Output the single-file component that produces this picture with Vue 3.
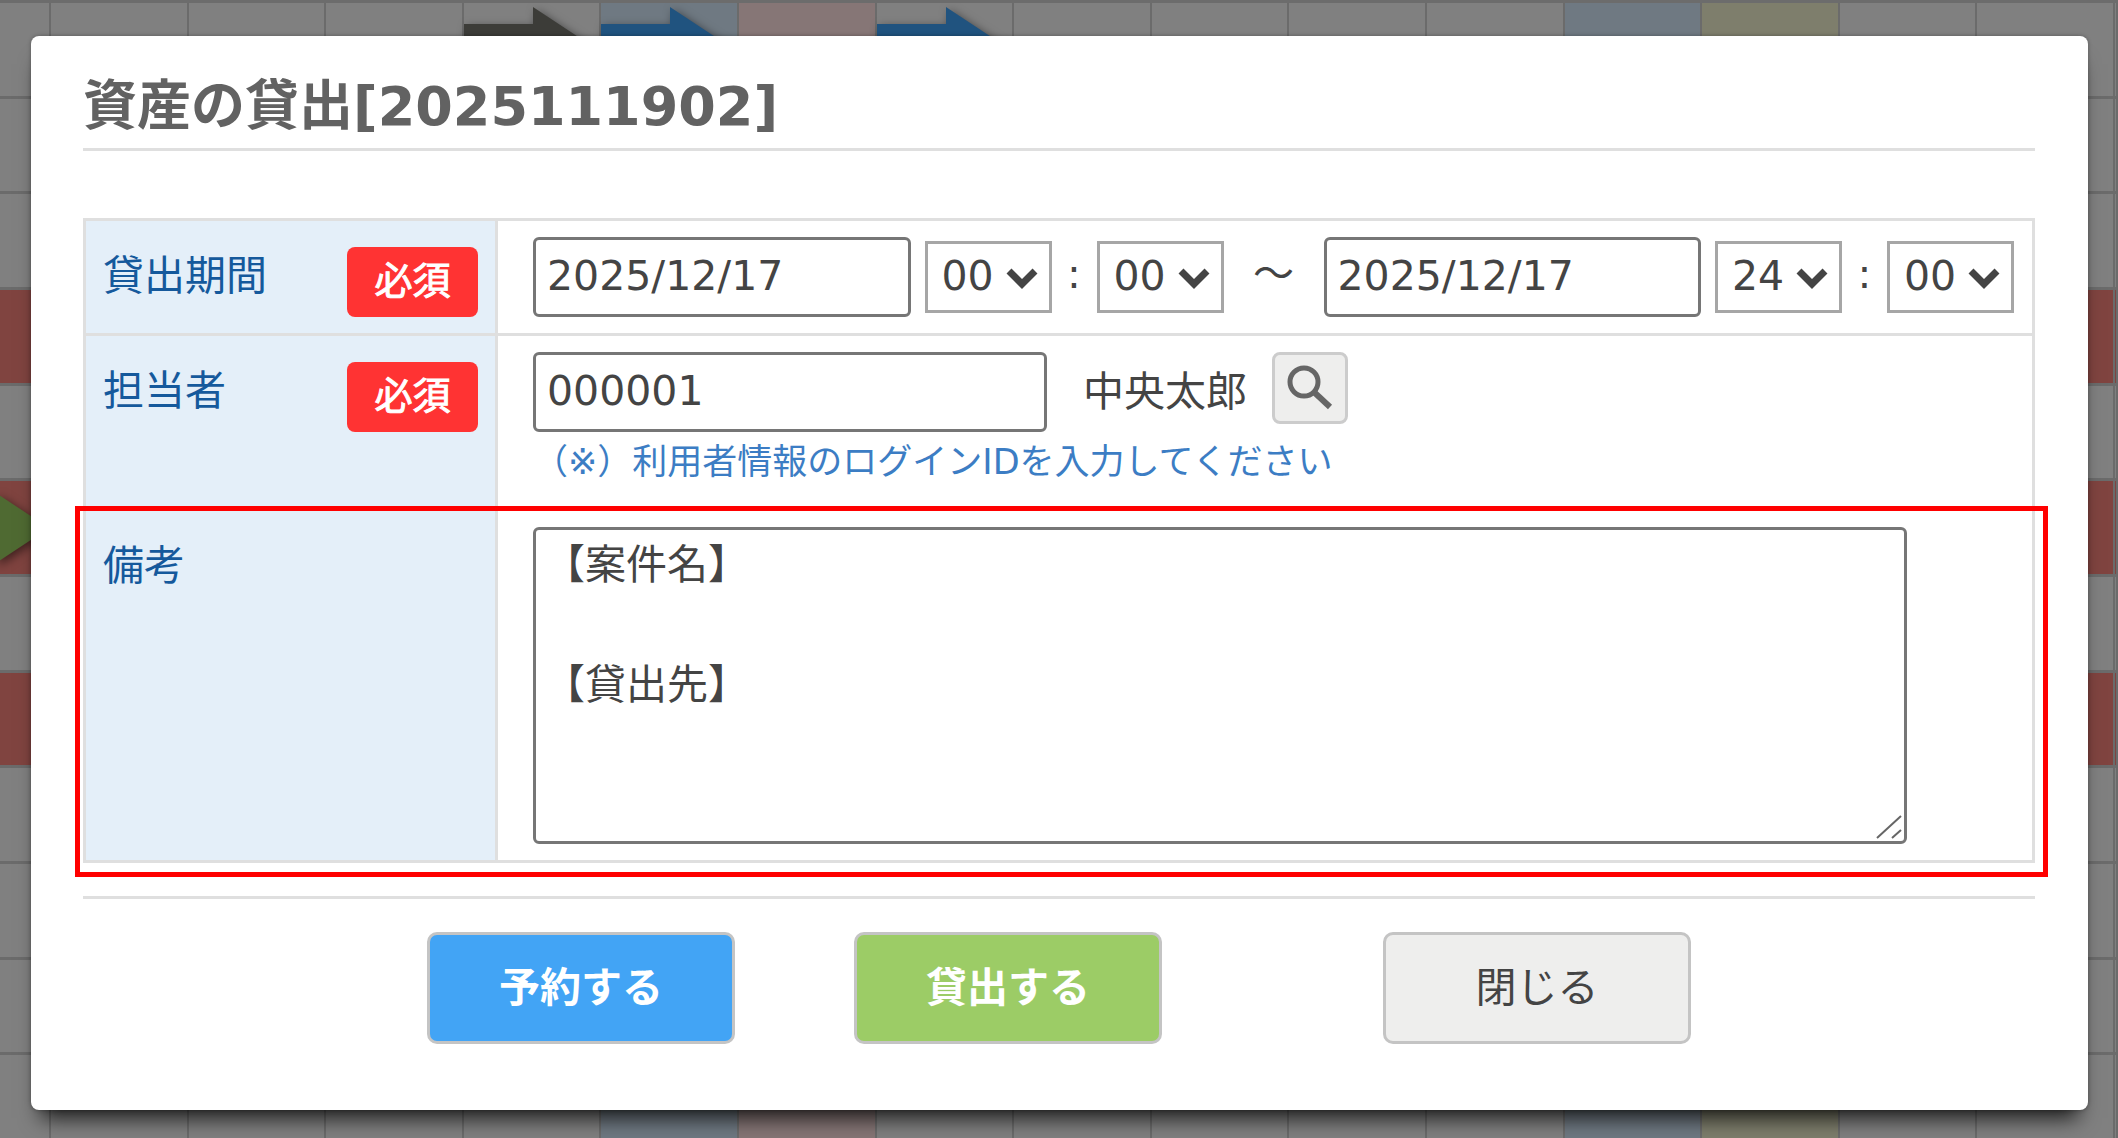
<script setup>
import { ref } from 'vue'

const columns = Array.from({ length: 17 }, (_, i) => i)
const rows = Array.from({ length: 12 }, (_, i) => i)
const tints = { 5: 'saturday', 6: 'sunday', 12: 'saturday', 13: 'holiday' }
const arrows = { '0-4': 'dark', '0-5': 'blue', '0-7': 'blue', '5-0': 'green' }
const busyRows = [3, 5, 7]

const cellClass = (r, c) => (busyRows.includes(r) ? 'busy' : tints[c] || '')

const hours = Array.from({ length: 25 }, (_, i) => String(i).padStart(2, '0'))
const minutes = ['00', '15', '30', '45']

const startDate = ref('2025/12/17')
const startHour = ref('00')
const startMinute = ref('00')
const endDate = ref('2025/12/17')
const endHour = ref('24')
const endMinute = ref('00')
const userId = ref('000001')
const note = ref('【案件名】\n\n【貸出先】\n')
</script>

<template>
  <div class="page">
    <div class="schedule" aria-hidden="true">
      <template v-for="r in rows" :key="r">
        <div v-for="c in columns" :key="c" class="cell" :class="cellClass(r, c)">
          <svg v-if="arrows[`${r}-${c}`]" class="arrow" :class="arrows[`${r}-${c}`]" width="122" height="70" viewBox="0 0 122 70">
            <path d="M0 17H69V0L122 35L69 70V53H0Z" />
          </svg>
        </div>
      </template>
    </div>

    <main class="modal" role="dialog" aria-labelledby="dialog-title">
      <h1 id="dialog-title">資産の貸出[2025111902]</h1>

      <table class="form">
        <tbody>
          <tr>
            <th scope="row">
              <div class="label">
                <label for="start-date">貸出期間</label>
                <span class="required">必須</span>
              </div>
            </th>
            <td>
              <div class="line">
                <input id="start-date" v-model="startDate" type="text" class="date" />
                <span class="select">
                  <select v-model="startHour" aria-label="開始時">
                    <option v-for="h in hours" :key="h">{{ h }}</option>
                  </select>
                  <svg class="chevron" viewBox="0 0 32 22"><path d="M3 4L16 17L29 4" /></svg>
                </span>
                <span class="colon">:</span>
                <span class="select">
                  <select v-model="startMinute" aria-label="開始分">
                    <option v-for="m in minutes" :key="m">{{ m }}</option>
                  </select>
                  <svg class="chevron" viewBox="0 0 32 22"><path d="M3 4L16 17L29 4" /></svg>
                </span>
                <span class="tilde">～</span>
                <input v-model="endDate" type="text" class="date" aria-label="終了日" />
                <span class="select">
                  <select v-model="endHour" aria-label="終了時">
                    <option v-for="h in hours" :key="h">{{ h }}</option>
                  </select>
                  <svg class="chevron" viewBox="0 0 32 22"><path d="M3 4L16 17L29 4" /></svg>
                </span>
                <span class="colon">:</span>
                <span class="select">
                  <select v-model="endMinute" aria-label="終了分">
                    <option v-for="m in minutes" :key="m">{{ m }}</option>
                  </select>
                  <svg class="chevron" viewBox="0 0 32 22"><path d="M3 4L16 17L29 4" /></svg>
                </span>
              </div>
            </td>
          </tr>
          <tr>
            <th scope="row">
              <div class="label">
                <label for="user-id">担当者</label>
                <span class="required">必須</span>
              </div>
            </th>
            <td>
              <div class="line">
                <input id="user-id" v-model="userId" type="text" class="user" />
                <span class="name">中央太郎</span>
                <button type="button" class="search" aria-label="検索">
                  <svg viewBox="0 0 48 48" width="48" height="48">
                    <circle cx="18" cy="18" r="14" />
                    <path d="M29 29L44 43" class="handle" />
                  </svg>
                </button>
              </div>
              <p class="hint">（※）利用者情報のログインIDを入力してください</p>
            </td>
          </tr>
          <tr class="note-row">
            <th scope="row">
              <div class="label"><label for="note">備考</label></div>
            </th>
            <td>
              <div class="note">
                <textarea id="note" v-model="note"></textarea>
                <svg class="grip" width="28" height="26" viewBox="0 0 28 26">
                  <path d="M2 24L26 2M17 24L26 16" />
                </svg>
              </div>
              <div class="highlight"></div>
            </td>
          </tr>
        </tbody>
      </table>

      <div class="actions">
        <button type="button" class="action reserve">予約する</button>
        <button type="button" class="action lend">貸出する</button>
        <button type="button" class="action close">閉じる</button>
      </div>
    </main>
  </div>
</template>

<style>
body {
  margin: 0;
  background: #808080;
}
</style>

<style scoped>
.page {
  position: relative;
  min-height: 100vh;
  box-sizing: border-box;
  padding: 36px 30px 24px 31px;
  overflow: hidden;
  color: #444;
  font-family: "DejaVu Sans", "Noto Sans CJK JP", sans-serif;
  font-size: 41px;
}

.schedule {
  position: absolute;
  inset: 0;
  display: grid;
  grid-template-columns: 51px repeat(15, 1fr) 3px;
  grid-auto-rows: 96px 95px 96px;
  border-top: 3px solid #6c6c6c;
  overflow: hidden;
}

.cell {
  position: relative;
  border-right: 2px solid #6b6b6b;
  border-bottom: 3px solid #6b6b6b;
  background: #808080;
}

.cell.saturday { background: #6f7982; }
.cell.sunday { background: #867676; }
.cell.holiday { background: #7e7e6c; }
.cell.busy { background: #804440; }

.arrow {
  position: absolute;
  top: 4px;
  left: 0;
  z-index: 1;
  filter: drop-shadow(3px 3px 5px rgba(0, 0, 0, 0.5));
}

.arrow.dark { fill: #3c3c38; }
.arrow.blue { fill: #20537f; }
.arrow.green {
  top: 12px;
  left: auto;
  right: 0;
  fill: #4f6a32;
}

.modal {
  position: relative;
  z-index: 2;
  padding: 35px 53px 66px 52px;
  border-radius: 8px;
  background: #fff;
  box-shadow: 0 0 4px rgba(0, 0, 0, 0.3), 0 18px 20px -10px rgba(0, 0, 0, 0.8);
}

h1 {
  margin: 0 0 67px;
  padding-bottom: 5px;
  border-bottom: 3px solid #dfdfdf;
  color: #626262;
  font-size: 54px;
  line-height: 72px;
}

.form {
  width: 100%;
  border-collapse: collapse;
  table-layout: fixed;
}

th,
td {
  border: 3px solid #dfdfdf;
  vertical-align: top;
}

th {
  width: 375px;
  padding: 16px 17px;
  background: #e4eff9;
  color: #15599c;
  font-weight: 400;
  text-align: left;
}

td {
  padding: 16px 18px 16px 35px;
}

.label {
  display: flex;
  justify-content: space-between;
  align-items: flex-start;
  line-height: 78px;
}

.required {
  width: 131px;
  height: 70px;
  margin-top: 10px;
  border-radius: 8px;
  background: #f33;
  color: #fff;
  font-size: 38px;
  line-height: 68px;
  text-align: center;
  -webkit-text-stroke: 1px #fff;
}

.line {
  display: flex;
  align-items: center;
}

input,
select,
textarea,
button {
  box-sizing: border-box;
  margin: 0;
  color: inherit;
  font: inherit;
}

input {
  height: 80px;
  padding: 0 11px 2px;
  border: 3px solid #767676;
  border-radius: 6px;
  background: #fff;
}

.date {
  flex: 1;
  min-width: 0;
  margin-right: 14px;
}

.select {
  position: relative;
  display: flex;
}

select {
  width: 127px;
  height: 72px;
  padding: 0 0 2px 14px;
  border: 3px solid #a6a6a6;
  border-radius: 0;
  background: #fff;
  appearance: none;
}

.chevron {
  position: absolute;
  top: 26px;
  right: 14px;
  width: 32px;
  height: 22px;
  fill: none;
  stroke: #444;
  stroke-width: 7;
  pointer-events: none;
}

.colon {
  width: 45px;
  padding-bottom: 6px;
  text-align: center;
}

.tilde {
  width: 100px;
  padding-bottom: 14px;
  text-align: center;
}

.user {
  width: 514px;
}

.name {
  margin: 0 25px 0 36px;
  padding-bottom: 8px;
}

.search {
  display: flex;
  align-items: center;
  justify-content: center;
  width: 76px;
  height: 72px;
  margin-bottom: 8px;
  padding: 0;
  border: 3px solid #ccc;
  border-radius: 8px;
  background: #eeeeed;
}

.search svg {
  fill: none;
  stroke: #666;
  stroke-width: 5;
}

.search .handle {
  stroke-width: 6;
}

.hint {
  margin: 0;
  color: #3c7dc4;
  font-size: 35px;
  line-height: 60px;
}

.note-row {
  position: relative;
}

.note {
  position: relative;
  width: calc(100% - 107px);
}

textarea {
  display: block;
  width: 100%;
  height: 317px;
  padding: 5px 8px;
  border: 3px solid #767676;
  border-radius: 6px;
  background: #fff;
  line-height: 60px;
  resize: none;
}

.grip {
  position: absolute;
  right: 4px;
  bottom: 4px;
  fill: none;
  stroke: #666;
  stroke-width: 2;
  pointer-events: none;
}

.highlight {
  position: absolute;
  inset: -4px -14px -15px -10px;
  border: 5px solid #f00;
  pointer-events: none;
}

.actions {
  display: flex;
  justify-content: center;
  margin-top: 33px;
  padding-top: 33px;
  border-top: 3px solid #dfdfdf;
}

.action {
  width: 308px;
  height: 112px;
  padding: 0 0 9px;
  border: 3px solid #c4c4c4;
  border-radius: 10px;
}

.reserve {
  background: #42a4f5;
  color: #fff;
  font-weight: 700;
}

.lend {
  margin-left: 119px;
  background: #9ccc66;
  color: #fff;
  font-weight: 700;
}

.close {
  margin-left: 221px;
  background: #eeeeed;
}
</style>
